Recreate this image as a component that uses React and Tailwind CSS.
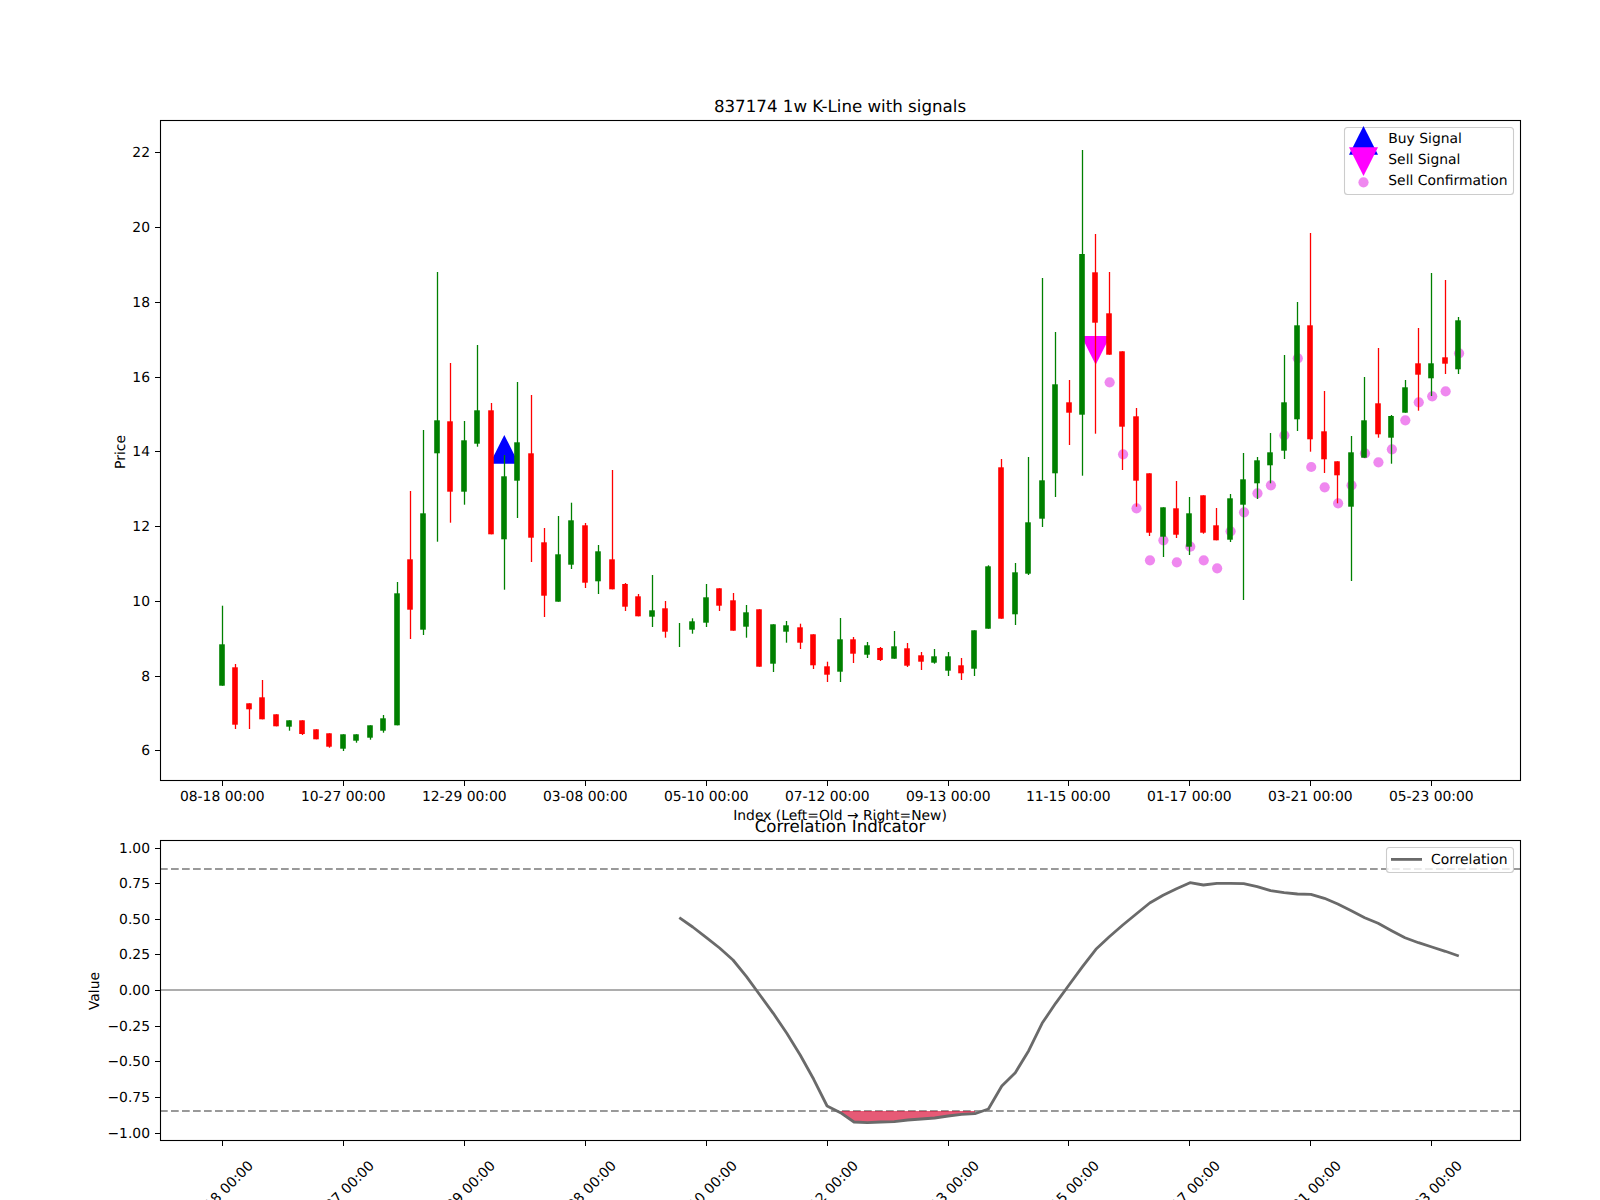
const X = (i) => 222.3 + 13.44 * i;

// [bullish, wickTop, bodyTop, bodyBottom, wickBottom]
const candles = [
  [1,605.7,644.3,685.7,685.7],[0,664,667.3,724.7,729],[0,703.3,703.3,709.3,729],[0,680,697.3,719.3,719.3],[0,714.3,714.3,726.3,726.3],
  [1,720.3,720.3,726.7,730.7],[0,720.3,720.3,734,735],[0,729.3,729.3,739.3,739.3],[0,733.3,733.3,746.7,747.7],[1,734.3,734.3,748.7,751],
  [1,734.3,734.3,740.7,742.7],[1,725.3,725.3,737.7,739.7],[1,715,718.3,730.7,732.7],[1,582,593.3,725.3,725.3],[0,491,559.3,609.7,639],
  [1,430,513.3,629.7,635],[1,272,420.3,453.3,541.7],[0,363,421.3,491.7,522.7],[1,421,440.3,491.7,504.7],[1,345,410.3,443.7,446.7],
  [0,403,410.3,534.3,534.3],[1,455,476.3,539.3,589.7],[1,382,442.3,480.7,518],[0,395,453.3,537.7,562],[0,528,542.3,595.7,617],
  [1,516,554.3,601.7,601.7],[1,502.7,520.3,564.7,569],[0,523,525.3,582.7,588],[1,545,551.3,581.3,594],[0,470,559.3,589.3,589.3],
  [0,583,584,606.7,611],[0,594,596.3,616.3,616.3],[1,575,610.3,616.7,627],[0,601,608.3,631.7,637.7],[1,623,null,null,647],
  [1,618.3,621.3,629.7,633.7],[1,584,597.3,622.7,627],[0,588.3,588.3,605.7,611],[0,593,600.3,630.7,630.7],[1,605,612.3,626.7,637.7],
  [0,609.3,609.3,666.7,666.7],[1,624.3,624.3,663.7,672],[1,621,625.3,631.7,642.7],[0,623.7,627.3,642.7,649],[0,634.3,634.3,665.3,669],
  [0,661.7,666.3,674.7,682],[1,618,639.3,671.7,682],[0,637,639.3,653.7,663],[1,642,645.3,654.7,658],[0,647,648,660,661],
  [1,631,646.3,658.7,658.7],[0,643,648.3,665.7,667],[0,652,655.3,661.7,670],[1,649,656.3,662.7,663.7],[1,652,656.3,670.7,676],
  [0,658,665.3,673.3,680],[1,630.3,630.3,668.7,676],[1,565.3,566.3,628.7,628.7],[0,459,467.3,618.7,618.7],[1,563,572.3,614.3,625],
  [1,457,522.3,573.7,575],[1,278,480.3,518.7,527],[1,332,384.3,473.3,497],[0,380,402.3,412.7,445],[1,150,254,414.7,475.7],
  [0,234,272.3,322.7,433.7],[0,272,313.3,354.7,354.7],[0,351.3,351.3,426.7,470],[0,408,416.3,480.7,506.7],[0,473.3,473.3,532.7,536],
  [1,507.3,507.3,536.7,557],[0,481,508.3,534.7,538],[1,497,513.3,546.7,555],[0,495.3,495.3,532.7,533.7],[0,508,525.3,540.3,540.3],
  [1,494,498.3,539.7,542],[1,453,479.3,504.7,600],[1,457,460.3,483.3,499],[1,433,452.3,465.3,483.3],[1,355,402.3,450.7,459],
  [1,302,325.3,419.3,431],[0,233,325.3,439.3,451.7],[0,391,431.3,459.3,473],[0,461.3,461.3,475.3,503.3],[1,436,452.3,506.7,581],
  [1,377,420.3,457.7,457.7],[0,348,403.3,434.3,437.7],[1,415,416,437.7,463.7],[1,380,387.3,412.7,412.7],[0,328,363.3,374.7,410.7],
  [1,273,363.3,378.3,396],[0,280,357.3,363.7,374],[1,317,320.3,369.3,374],
];

// first index 66
const dots = [382.3,454.3,508.3,560.3,540.3,562.3,546.7,560.3,568.3,531.3,512.3,493.3,485.3,435.3,358.3,467,487.3,503.3,485.3,453.3,462.3,449.3,420.3,402.3,396.3,391.3,353.3];

// first index 34
const curve = [917.7,927,937.3,948,960,976.7,995,1013.3,1033.3,1055,1079.3,1106,1112.7,1122,1122.7,1122,1121.7,1120,1119,1118,1116,1114.3,1113.7,1109,1086,1072.7,1050.7,1023.3,1003.3,985,966.7,949.3,936.7,925,914,903,895.3,888.7,882.7,885,883.3,883.3,883.7,886.7,890.7,892.7,894,894.3,898.3,904,910.7,917.7,923.3,930.7,937.7,942.7,947,951.3,956];

const dates = ['08-18','10-27','12-29','03-08','05-10','07-12','09-13','11-15','01-17','03-21','05-23'];
const tickXs = [222,343,464,585,706,827,948,1068,1189,1310,1431];
const priceTicks = [[22,152],[20,227],[18,302],[16,377],[14,451],[12,526],[10,601],[8,676],[6,750]];
const valueTicks = [['1.00',848],['0.75',883],['0.50',919],['0.25',954],['0.00',990],['−0.25',1026],['−0.50',1061],['−0.75',1097],['−1.00',1133]];

const curvePts = curve.map((y, k) => `${X(34 + k).toFixed(1)},${y}`).join(' ');
const fillPts = [`${X(46).toFixed(1)},1111`, ...curve.slice(12, 23).map((y, k) => `${X(46 + k).toFixed(1)},${y}`), `${X(56).toFixed(1)},1111`].join(' ');

function Candle({ c, i }) {
  const wx = Math.floor(X(i));
  const col = c[0] ? '#008000' : '#ff0000';
  return (
    <g fill={col}>
      <rect x={wx - 0.15} y={c[1]} width={1.3} height={c[4] - c[1]} />
      {c[2] !== null && <rect x={wx - 2.8} y={c[2]} width={5.6} height={c[3] - c[2]} />}
    </g>
  );
}

const tri = (cx, top, h, w, up) =>
  up ? `${cx},${top} ${cx - w / 2},${top + h} ${cx + w / 2},${top + h}` : `${cx},${top + h} ${cx - w / 2},${top} ${cx + w / 2},${top}`;

function Frame({ x, y, w, h }) {
  return <rect x={x + 0.5} y={y + 0.5} width={w} height={h} fill="none" stroke="#000" strokeWidth={1.1} />;
}

export default function App() {
  return (
    <div className="w-[1600px] h-[1200px] overflow-hidden bg-white flex flex-col font-['DejaVu_Sans',sans-serif] text-[13.89px] fill-black [text-rendering:geometricPrecision]">
      <svg viewBox="0 0 1600 840" className="w-[1600px] h-[840px] shrink-0 block overflow-visible">
        <text x={840} y={112} textAnchor="middle" className="text-[16.67px]">837174 1w K-Line with signals</text>

        <polygon points={tri(504.3, 435, 28.7, 29, true)} fill="#0000ff" />
        <polygon points={tri(1095.7, 336, 28.7, 29, false)} fill="#ff00ff" />
        {dots.map((y, k) => <circle key={k} cx={X(66 + k) + 0.3} cy={y} r={5.1} fill="#ee82ee" opacity={0.95} />)}
        {candles.map((c, i) => <Candle key={i} c={c} i={i} />)}

        <Frame x={160} y={120} w={1360} h={660} />
        {priceTicks.map(([v, y]) => (
          <g key={v}>
            <rect x={155} y={y} width={5} height={1} fill="#000" />
            <text x={150} y={y + 5.3} textAnchor="end">{v}</text>
          </g>
        ))}
        {tickXs.map((x, k) => (
          <g key={k}>
            <rect x={x} y={781} width={1} height={5} fill="#000" />
            <text x={x + 0.3} y={801} textAnchor="middle">{dates[k]} 00:00</text>
          </g>
        ))}
        <text transform="translate(125 452) rotate(-90)" textAnchor="middle">Price</text>
        <text x={840} y={820} textAnchor="middle">Index (Left=Old → Right=New)</text>

        <rect x={1344.5} y={127.5} width={169} height={67} rx={3} fill="#fff" fillOpacity={0.8} stroke="#cccccc" strokeWidth={1.1} />
        <polygon points={tri(1363.5, 126, 28.7, 29, true)} fill="#0000ff" />
        <polygon points={tri(1363.5, 147.3, 28.7, 29, false)} fill="#ff00ff" />
        <circle cx={1363.5} cy={182.3} r={5.1} fill="#ee82ee" opacity={0.95} />
        <text x={1388.3} y={143.3}>Buy Signal</text>
        <text x={1388.3} y={164.3}>Sell Signal</text>
        <text x={1388.3} y={185.3}>Sell Confirmation</text>
      </svg>

      <svg viewBox="0 840 1600 360" className="w-[1600px] h-[360px] shrink-0 block overflow-visible">
        <text x={840} y={831.7} textAnchor="middle" className="text-[16.67px]">Correlation Indicator</text>

        <rect x={160} y={989} width={1360} height={2} fill="#adadad" />
        <line x1={160} x2={1520} y1={869} y2={869} stroke="#999999" strokeWidth={2} strokeDasharray="7.7 3.3" />
        <line x1={160} x2={1520} y1={1111} y2={1111} stroke="#999999" strokeWidth={2} strokeDasharray="7.7 3.3" />
        <polygon points={fillPts} fill="#dc143c" opacity={0.7} />
        <polyline points={curvePts} fill="none" stroke="#6a6a6a" strokeWidth={2.8} strokeLinejoin="round" />

        <Frame x={160} y={840} w={1360} h={300} />
        {valueTicks.map(([v, y]) => (
          <g key={v}>
            <rect x={155} y={y} width={5} height={1} fill="#000" />
            <text x={150} y={y + 5.3} textAnchor="end">{v}</text>
          </g>
        ))}
        {tickXs.map((x, k) => (
          <g key={k}>
            <rect x={x} y={1141} width={1} height={5} fill="#000" />
            <text transform={`translate(${x - 1.5} 1193) rotate(-45)`} y={5} textAnchor="middle">{dates[k]} 00:00</text>
          </g>
        ))}
        <text transform="translate(99 991) rotate(-90)" textAnchor="middle">Value</text>

        <rect x={1386.5} y={847.5} width={127} height={25} rx={3} fill="#fff" fillOpacity={0.8} stroke="#cccccc" strokeWidth={1.1} />
        <rect x={1391} y={858} width={31} height={2.8} fill="#6a6a6a" />
        <text x={1431} y={864}>Correlation</text>
      </svg>
    </div>
  );
}
